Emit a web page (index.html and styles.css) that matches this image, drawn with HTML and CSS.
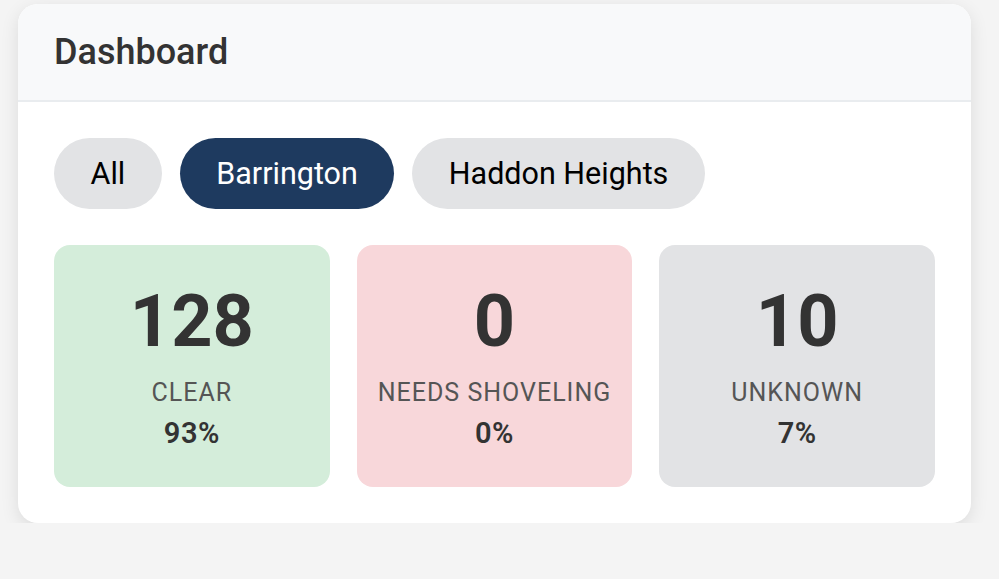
FILE: index.html
```html
<!DOCTYPE html>
<html>
<head>
<meta charset="utf-8">
<link rel="stylesheet" href="styles.css">
</head>
<body>
<div class="card">
  <div class="card-header">
    <h1 class="title">Dashboard</h1>
  </div>
  <div class="card-body">
    <div class="filters">
      <button class="pill">All</button>
      <button class="pill active">Barrington</button>
      <button class="pill">Haddon Heights</button>
    </div>
    <div class="stats">
      <div class="stat clear">
        <div class="num">128</div>
        <div class="label">CLEAR</div>
        <div class="pct">93%</div>
      </div>
      <div class="stat needs">
        <div class="num">0</div>
        <div class="label">NEEDS SHOVELING</div>
        <div class="pct">0%</div>
      </div>
      <div class="stat unknown">
        <div class="num">10</div>
        <div class="label">UNKNOWN</div>
        <div class="pct">7%</div>
      </div>
    </div>
  </div>
</div>
</body>
</html>
```

FILE: styles.css
```css
html, body {
  margin: 0;
  padding: 0;
  background: #f4f4f4;
  font-family: Roboto, "Liberation Sans", Arial, sans-serif;
}
body {
  padding: 4px 28px 0 18px;
}
.card {
  background: #ffffff;
  border-radius: 20px;
  box-shadow: 0 5px 18px rgba(0, 0, 0, 0.1);
  overflow: hidden;
}
.card-header {
  background: #f8f9fa;
  border-bottom: 2px solid #e9ecef;
  padding: 27px 36px 27px;
}
.title {
  margin: 0;
  font-size: 36px;
  font-weight: 500;
  color: #333333;
  line-height: 42px;
}
.card-body {
  padding: 36px 36px 36px;
}
.filters {
  display: flex;
  gap: 18px;
  margin-bottom: 36px;
}
.pill {
  font-family: Roboto, "Liberation Sans", Arial, sans-serif;
  font-size: 30.5px;
  font-weight: 400;
  line-height: 35px;
  padding: 18px 36.5px;
  border: none;
  border-radius: 36px;
  background: #e2e3e5;
  color: #000000;
  margin: 0;
}
.pill.active {
  background: #1e3a5f;
  color: #ffffff;
}
.stats {
  display: grid;
  grid-template-columns: repeat(3, 1fr);
  gap: 27px;
}
.stat {
  border-radius: 16px;
  padding: 35px 10px 37px;
  text-align: center;
  color: #333333;
}
.stat.clear { background: #d4edda; }
.stat.needs { background: #f8d7da; }
.stat.unknown { background: #e2e3e5; }
.num {
  font-size: 72px;
  font-weight: 700;
  line-height: 84px;
  margin-bottom: 14px;
}
.label {
  font-size: 25px;
  line-height: 29px;
  letter-spacing: 1px;
  color: #555555;
  margin-bottom: 10px;
}
.pct {
  font-size: 29px;
  font-weight: 600;
  line-height: 33px;
  letter-spacing: 0.5px;
}
```
